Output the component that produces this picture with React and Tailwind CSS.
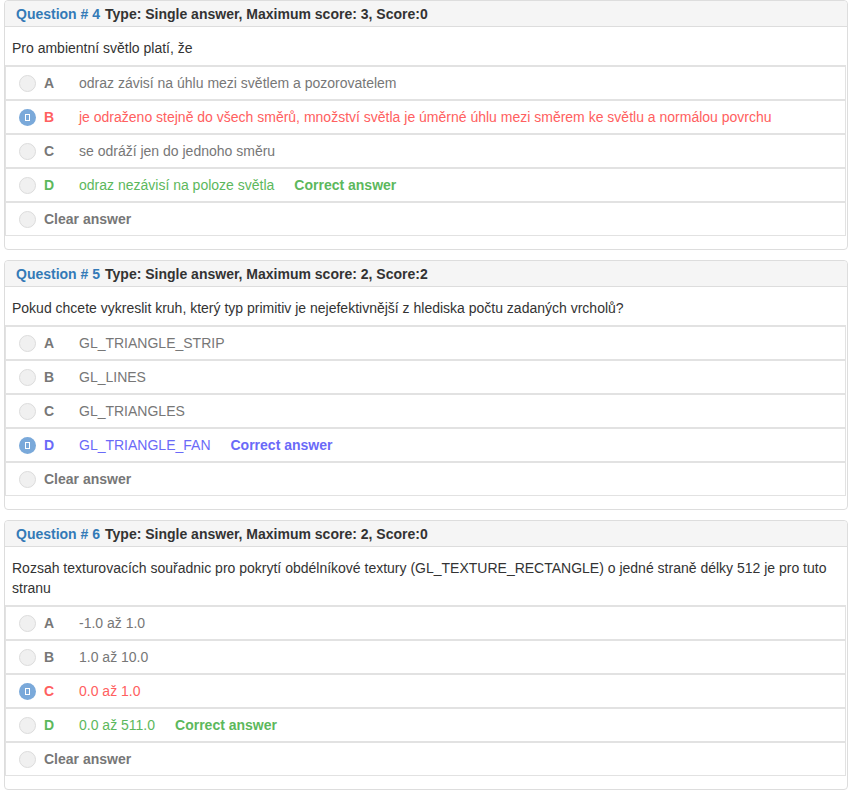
import React from 'react';

const questions = [
  {
    no: 4,
    meta: 'Type: Single answer, Maximum score: 3, Score:0',
    text: 'Pro ambientní světlo platí, že',
    answers: [
      { key: 'A', text: 'odraz závisí na úhlu mezi světlem a pozorovatelem' },
      { key: 'B', text: 'je odraženo stejně do všech směrů, množství světla je úměrné úhlu mezi směrem ke světlu a normálou povrchu', picked: true, tone: 'red' },
      { key: 'C', text: 'se odráží jen do jednoho směru' },
      { key: 'D', text: 'odraz nezávisí na poloze světla', correct: true, tone: 'green' },
    ],
  },
  {
    no: 5,
    meta: 'Type: Single answer, Maximum score: 2, Score:2',
    text: 'Pokud chcete vykreslit kruh, který typ primitiv je nejefektivnější z hlediska počtu zadaných vrcholů?',
    answers: [
      { key: 'A', text: 'GL_TRIANGLE_STRIP' },
      { key: 'B', text: 'GL_LINES' },
      { key: 'C', text: 'GL_TRIANGLES' },
      { key: 'D', text: 'GL_TRIANGLE_FAN', picked: true, correct: true, tone: 'blue' },
    ],
  },
  {
    no: 6,
    meta: 'Type: Single answer, Maximum score: 2, Score:0',
    text: 'Rozsah texturovacích souřadnic pro pokrytí obdélníkové textury (GL_TEXTURE_RECTANGLE) o jedné straně délky 512 je pro tuto stranu',
    answers: [
      { key: 'A', text: '-1.0 až 1.0' },
      { key: 'B', text: '1.0 až 10.0' },
      { key: 'C', text: '0.0 až 1.0', picked: true, tone: 'red' },
      { key: 'D', text: '0.0 až 511.0', correct: true, tone: 'green' },
    ],
  },
];

const toneText = {
  red: 'text-[#ff6060]',
  green: 'text-[#5cb85c]',
  blue: 'text-[#6a6af8]',
};

function Radio({ picked }) {
  if (picked) {
    return (
      <span className="w-[17px] h-[17px] rounded-full bg-[#7aa9da] flex items-center justify-center shrink-0">
        <span className="w-[5px] h-[7px] border border-white" />
      </span>
    );
  }
  return <span className="w-[17px] h-[17px] rounded-full bg-[#f0f0f0] border border-[#dcdcdc] shrink-0" />;
}

function AnswerRow({ a }) {
  const tone = a.tone ? toneText[a.tone] : 'text-[#777]';
  return (
    <div className="h-[34px] border-t-2 border-[#e2e2e2] flex items-center pl-[13px]">
      <Radio picked={a.picked} />
      <span className={`ml-[8px] w-[35px] font-bold ${tone}`}>{a.key}</span>
      <span className={tone}>{a.text}</span>
      {a.correct && <span className={`ml-5 font-bold ${toneText[a.tone]}`}>Correct answer</span>}
    </div>
  );
}

function Question({ q }) {
  return (
    <div className="border border-[#ddd] rounded mb-[10px] bg-white">
      <div className="h-[26px] bg-[#f5f5f5] border-b border-[#ddd] flex items-center px-[11px] pt-px font-bold rounded-t">
        <span className="text-[#337ab7]">Question # {q.no}</span>
        <span className="ml-[5px] text-[#333]">{q.meta}</span>
      </div>
      <div className="px-[7px] pt-[11px] pb-[7px] leading-5 text-[#333]">{q.text}</div>
      <div className="border-x border-b border-[#e2e2e2] mr-px">
        {q.answers.map(a => <AnswerRow key={a.key} a={a} />)}
        <div className="h-[34px] border-t-2 border-[#e2e2e2] flex items-center pl-[13px]">
          <Radio />
          <span className="ml-[8px] font-bold text-[#777]">Clear answer</span>
        </div>
      </div>
      <div className="h-[13px]" />
    </div>
  );
}

export default function App() {
  return (
    <div className="bg-white pl-1 pr-[3px] pt-0 text-[14px] font-['Liberation_Sans',Arial,sans-serif]">
      {questions.map(q => <Question key={q.no} q={q} />)}
    </div>
  );
}
